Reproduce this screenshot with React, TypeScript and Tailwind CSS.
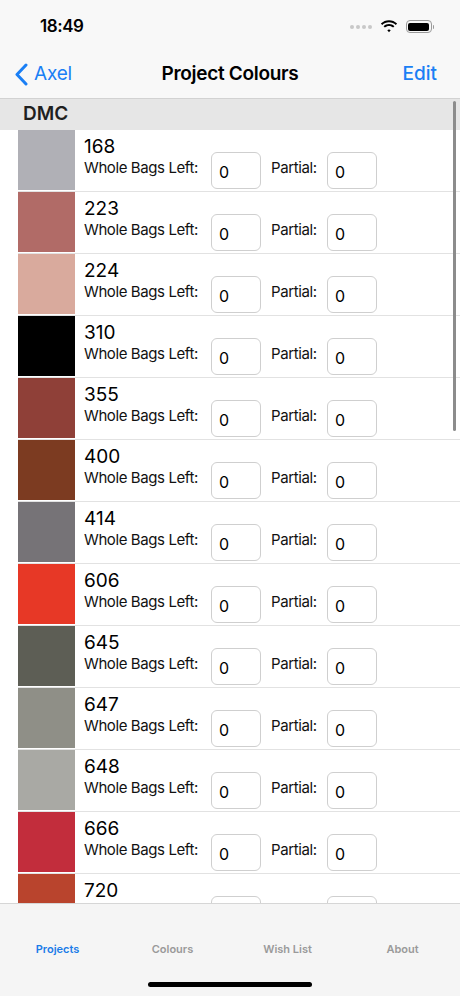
import React from 'react'

const COLOURS = [
  { code: '168', hex: '#b0b0b6' },
  { code: '223', hex: '#b16b67' },
  { code: '224', hex: '#d9aa9d' },
  { code: '310', hex: '#000000' },
  { code: '355', hex: '#8f4038' },
  { code: '400', hex: '#7c3b21' },
  { code: '414', hex: '#767377' },
  { code: '606', hex: '#e73826' },
  { code: '645', hex: '#5d5e55' },
  { code: '647', hex: '#8f8f87' },
  { code: '648', hex: '#a9a9a4' },
  { code: '666', hex: '#c22d3c' },
  { code: '720', hex: '#b9442d' },
]

const TABS = ['Projects', 'Colours', 'Wish List', 'About']

function StatusBar() {
  return (
    <div className="h-[51px] flex items-center justify-between pl-[40px] pr-[26px] pt-[2px]">
      <span className="text-[17px] font-semibold tracking-tight text-black">18:49</span>
      <div className="flex items-center gap-[6px]">
        <div className="flex gap-[2px] mr-[2px]">
          {[0, 1, 2, 3].map((i) => (
            <span key={i} className="w-[4px] h-[4px] rounded-full bg-[#c8c8c8]" />
          ))}
        </div>
        <svg width="18" height="13" viewBox="0 0 18 13">
          <path d="M9 2.2c2.6 0 5 1 6.8 2.7l1.3-1.4C14.9 1.4 12.1.2 9 .2S3.1 1.4.9 3.5l1.3 1.4C4 3.2 6.4 2.2 9 2.2z" fill="#000" />
          <path d="M9 6c1.6 0 3 .6 4.1 1.6l1.3-1.4C13 4.8 11.1 4 9 4S5 4.8 3.6 6.2l1.3 1.4C6 6.6 7.4 6 9 6z" fill="#000" />
          <path d="M9 9.6c.7 0 1.3.3 1.7.7L9 12.3 7.3 10.3c.4-.4 1-.7 1.7-.7z" fill="#000" />
        </svg>
        <div className="flex items-center ml-[2px]">
          <div className="w-[26px] h-[13px] rounded-[4px] border border-[#9a9a9a] p-[1.5px]">
            <div className="w-full h-full rounded-[2px] bg-black" />
          </div>
          <div className="w-[1.5px] h-[4px] bg-[#9a9a9a] rounded-r ml-[1px]" />
        </div>
      </div>
    </div>
  )
}

function NavBar() {
  return (
    <div className="relative h-[48px] flex items-center justify-between border-b border-[#d2d2d2]">
      <div className="flex items-center pl-[14px] text-[#1a7ff5]">
        <svg width="14" height="23" viewBox="0 0 14 23" fill="none">
          <path d="M12 2L3 11.5 12 21" stroke="#1a7ff5" strokeWidth="3" strokeLinecap="round" strokeLinejoin="round" />
        </svg>
        <span className="ml-[6px] text-[19px] tracking-[-0.2px]">Axel</span>
      </div>
      <span className="absolute left-1/2 -translate-x-1/2 text-[19px] font-semibold tracking-[-0.3px] text-black">
        Project Colours
      </span>
      <span className="pr-[23px] text-[19px] font-medium text-[#1a7ff5]">Edit</span>
    </div>
  )
}

function ValueBox() {
  return (
    <div className="w-[50px] h-[37px] rounded-[6px] border border-[#cfcfcf] bg-white flex items-center pl-[7px] pt-[3px] text-[16px] text-black">
      0
    </div>
  )
}

function ColourRow({ code, hex }: { code: string; hex: string }) {
  return (
    <div className="h-[62px] flex items-center pl-[18px]">
      <div className="flex-1 h-full flex items-center border-b border-[#e2e2e2]">
        <div className="w-[57px] h-[60px] mb-px" style={{ backgroundColor: hex }} />
        <div className="pl-[9px] self-start flex flex-col">
          <span className="mt-[8px] h-[17px] leading-[17px] text-[19px] text-black">{code}</span>
          <div className="mt-[-3px] flex items-center">
            <span className="w-[127px] text-[15px] tracking-[-0.4px] text-[#111] -mt-[5px]">Whole Bags Left:</span>
            <ValueBox />
            <span className="ml-[10px] w-[56px] text-[15px] tracking-[-0.4px] text-[#111] -mt-[5px]">Partial:</span>
            <ValueBox />
          </div>
        </div>
      </div>
    </div>
  )
}

export default function App() {
  return (
    <div
      className="w-[460px] h-[996px] bg-white flex flex-col overflow-hidden relative"
      style={{ fontFamily: 'Inter, "Noto Sans", sans-serif' }}
    >
      <div className="bg-[#f8f8f8]">
        <StatusBar />
        <NavBar />
      </div>

      <div className="flex-1 overflow-hidden relative">
        <div className="h-[31px] bg-[#e6e6e6] flex items-center pl-[23px] text-[19px] font-semibold text-[#1f1f1f]">
          DMC
        </div>
        {COLOURS.map((c) => (
          <ColourRow key={c.code} code={c.code} hex={c.hex} />
        ))}
        {/* scroll indicator */}
        <div className="absolute right-[4px] top-[2px] w-[3px] h-[330px] rounded-full bg-[#8c8c8c]" />
      </div>

      <div className="h-[93px] shrink-0 bg-[#f5f5f5] border-t border-[#d6d6d6] flex flex-col">
        <div className="grid grid-cols-4 mt-[37px]">
          {TABS.map((t, i) => (
            <span
              key={t}
              className={
                'text-center text-[11px] font-semibold ' + (i === 0 ? 'text-[#1b7ce8]' : 'text-[#9a9a9a]')
              }
            >
              {t}
            </span>
          ))}
        </div>
        <div className="mt-auto mb-[9px] mx-auto w-[164px] h-[5px] rounded-full bg-black" />
      </div>
    </div>
  )
}
